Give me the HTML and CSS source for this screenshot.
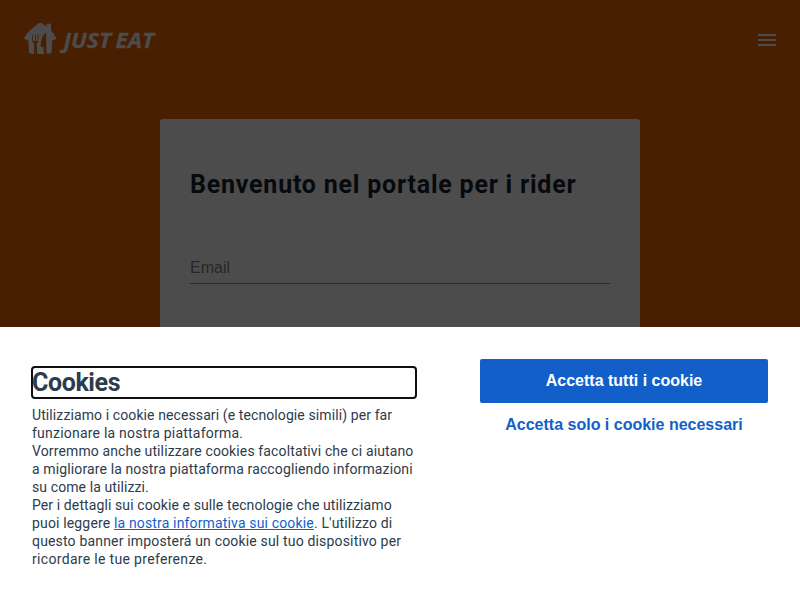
FILE: index.html
```html
<!DOCTYPE html>
<html lang="it">
<head>
<meta charset="utf-8">
<title>Just Eat</title>
<link rel="stylesheet" href="styles.css">
</head>
<body>
<div class="page">
  <header class="header">
    <svg class="logo" width="134" height="34" viewBox="0 0 134 34" role="img">
      <path class="logo-fill" d="M14.5 1.3Q16.2 0 17.9 1.3L22.4 4.6V2.1Q24.7 1.1 27 2.1V8.4Q30.8 12 32.4 16.5Q31.5 18 28.3 18L27.5 31.2Q16.2 33 5.1 31.2L4.2 18Q1.4 18 0 16.5Q2.1 11.2 8.2 6.4Z"/>
      <path class="logo-cut" d="M8.2 12.5H9V19H11.1V12.5H11.9V19H13.6V12.5H14.4V19Q14.3 20.6 12.7 21.2L13.2 34H10L10.3 21.2Q8.3 20.6 8.2 19ZM22.1 10.8V20L22.7 34H20.4L19.2 25H16.7Q16.2 14.5 22.1 10.8Z"/>
      <text class="logo-fill logo-text" x="39.5" y="26.3" textLength="47.5" lengthAdjust="spacingAndGlyphs">JUST</text>
      <text class="logo-fill logo-text" x="91.5" y="26.3" textLength="38.5" lengthAdjust="spacingAndGlyphs">EAT</text>
    </svg>
    <div class="menu"><i></i><i></i><i></i></div>
  </header>
  <main class="card">
    <h1>Benvenuto nel portale per i rider</h1>
    <div class="field">Email</div>
  </main>
</div>
<section class="banner">
  <div class="copy">
    <h2>Cookies</h2>
    <p>
      <span class="l1">Utilizziamo i cookie necessari (e tecnologie simili) per far</span>
      <span class="l2">funzionare la nostra piattaforma.</span>
      <span class="l3">Vorremmo anche utilizzare cookies facoltativi che ci aiutano</span>
      <span class="l4">a migliorare la nostra piattaforma raccogliendo informazioni</span>
      <span class="l5">su come la utilizzi.</span>
      <span class="l6">Per i dettagli sui cookie e sulle tecnologie che utilizziamo</span>
      <span class="l7">puoi leggere <a>la nostra informativa sui cookie</a>. L'utilizzo di</span>
      <span class="l8">questo banner imposterá un cookie sul tuo dispositivo per</span>
      <span class="l9">ricordare le tue preferenze.</span>
    </p>
  </div>
  <div class="actions">
    <button class="primary">Accetta tutti i cookie</button>
    <button class="ghost">Accetta solo i cookie necessari</button>
  </div>
</section>
</body>
</html>
```
FILE: styles.css
```css
* { box-sizing: border-box; }
body { margin: 0; height: 600px; overflow: hidden; display: flex; flex-direction: column; background: #fff; }
.page { height: 327px; overflow: hidden; background: #481f00; }
.header { height: 80px; padding: 0 24px; display: flex; align-items: center; justify-content: space-between; }
.logo { margin-top: -2px; overflow: visible; }
.logo-fill { fill: #4c4c4c; }
.logo-cut { fill: #481f00; }
.logo-text { font: italic 700 21.5px "Open Sans", sans-serif; stroke: #4c4c4c; stroke-width: .3px; }
.menu { width: 18px; display: flex; flex-direction: column; gap: 3px; }
.menu i { height: 2px; background: #4c4c4c; }
.card { width: 480px; height: 300px; margin: 39px auto 0; padding: 50px 30px; border-radius: 3px; background: #4c4c4c; }
h1 { margin: 0; font: 700 25px/32px Roboto, sans-serif; letter-spacing: .78px; color: #060a0e; white-space: nowrap; }
.field { margin-top: 51px; height: 32px; font: 16px/32px "Liberation Sans", sans-serif; color: #272727; border-bottom: 1px solid #2a2a2a; }
.banner { height: 273px; padding: 32px; display: flex; gap: 64px; background: #fff; }
.copy { width: 384px; padding-top: 8px; color: #2d3b4b; }
h2 { margin: 0 0 8px; height: 31px; font: 700 25px/31px Roboto, sans-serif; letter-spacing: -.4px; outline: 2px solid #101010; outline-offset: -1px; border-radius: 3px; }
p { margin: 0; font: 14px/18px Roboto, sans-serif; letter-spacing: .1px; }
p span { display: block; white-space: nowrap; }
.l2 { letter-spacing: .22px; }
.l3, .l4 { letter-spacing: .125px; }
.l7 { letter-spacing: .155px; }
.l8 { letter-spacing: .17px; }
.l9 { letter-spacing: .32px; }
a { color: #125fca; text-decoration: underline; }
.actions { width: 288px; display: flex; flex-direction: column; }
button { height: 44px; border: 0; padding: 0; border-radius: 2px; font: 700 16px/44px "Liberation Sans", sans-serif; }
.primary { background: #125fca; color: #fff; }
.ghost { background: none; color: #125fca; }
```
